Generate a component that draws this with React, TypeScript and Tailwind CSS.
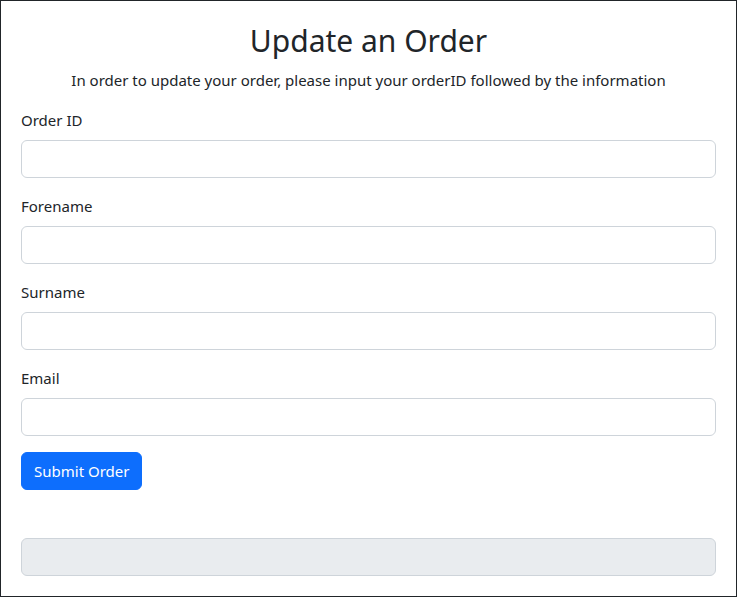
export default function App() {
  const fields = ['Order ID', 'Forename', 'Surname', 'Email']
  return (
    <div
      className="h-[597px] w-[737px] border border-[#212529] bg-white px-5 pt-5 text-[15px] leading-6 text-[#212529]"
      style={{ fontFamily: '"Segoe UI", "Noto Sans", sans-serif' }}
    >
      <h1 className="mb-2 text-center text-[30px] leading-[39px] font-normal">Update an Order</h1>
      <p className="mb-4 text-center">
        In order to update your order, please input your orderID followed by the information
      </p>
      <form onSubmit={(e) => e.preventDefault()}>
        {fields.map((f) => (
          <div key={f} className="mb-4">
            <label className="mb-2 block">{f}</label>
            <input
              type="text"
              className="block h-[38px] w-full rounded-md border border-[#ced4da] bg-white px-3 outline-none"
            />
          </div>
        ))}
        <button
          type="submit"
          className="h-[38px] rounded-md border border-[#0d6efd] bg-[#0d6efd] px-3 text-white"
        >
          Submit Order
        </button>
      </form>
      <div className="mt-12 h-[38px] w-full rounded-md border border-[#ced4da] bg-[#e9ecef]" />
    </div>
  )
}
